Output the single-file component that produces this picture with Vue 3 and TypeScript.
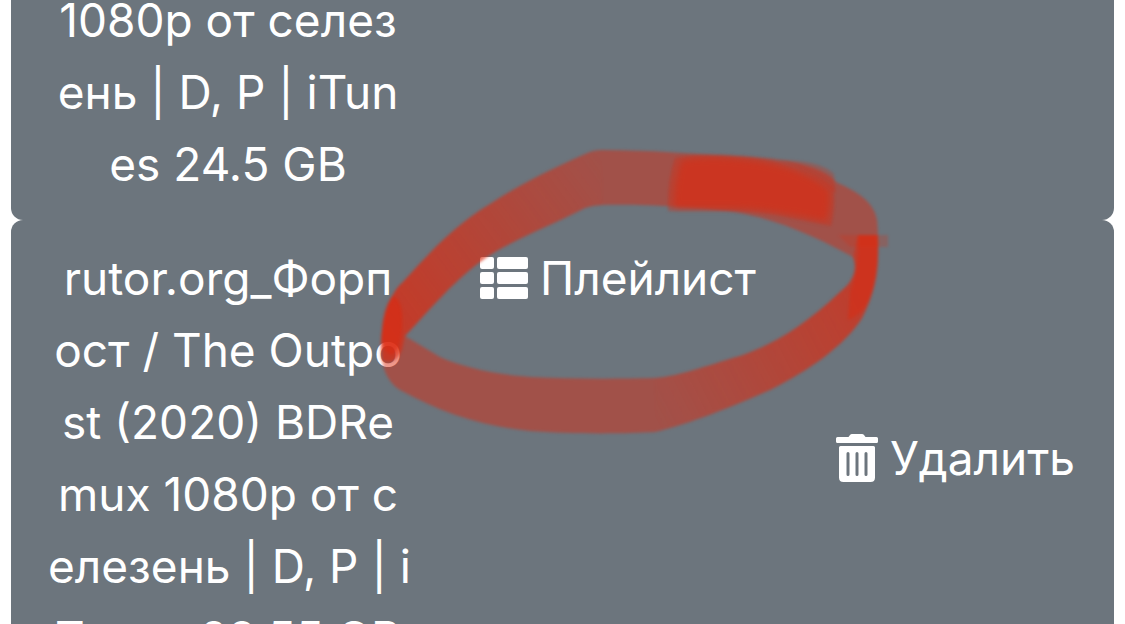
<script setup lang="ts">
interface Torrent {
  id: number
  lines: string[]
  actions: boolean
}

const torrents: Torrent[] = [
  { id: 1, lines: ['1080p от селез', 'ень | D, P | iTun', 'es 24.5 GB'], actions: false },
  {
    id: 2,
    lines: [
      'rutor.org_Форп',
      'ост / The Outpo',
      'st (2020) BDRe',
      'mux 1080p от с',
      'елезень | D, P | i',
      'Tunes 28.55 GB',
    ],
    actions: true,
  },
]
</script>

<template>
  <main class="page">
    <div class="list">
      <article v-for="t in torrents" :key="t.id" class="card">
        <p class="title">
          <span v-for="line in t.lines" :key="line" class="line">{{ line }}</span>
        </p>
        <template v-if="t.actions">
          <button type="button" class="action playlist">
            <svg class="icon" width="48" height="42" viewBox="0 0 48 42" aria-hidden="true">
              <g fill="currentColor">
                <rect x="0" y="0" width="14" height="12" rx="2" />
                <rect x="17" y="0" width="31" height="12" rx="2" />
                <rect x="0" y="15" width="14" height="12" rx="2" />
                <rect x="17" y="15" width="31" height="12" rx="2" />
                <rect x="0" y="30" width="14" height="12" rx="2" />
                <rect x="17" y="30" width="31" height="12" rx="2" />
              </g>
            </svg>
            <span>Плейлист</span>
          </button>
          <button type="button" class="action remove">
            <svg class="icon" width="42" height="48" viewBox="0 0 42 48" aria-hidden="true">
              <path
                fill="currentColor"
                fill-rule="evenodd"
                d="M1.500 3H12.500L14 1Q14.700 0 16 0H26Q27.300 0 28 1L29.500 3H40.500Q42 3 42 4.500V7.500Q42 9 40.500 9H1.500Q0 9 0 7.500V4.500Q0 3 1.500 3ZM4.500 12H37.500Q39 12 39 13.500V43.500Q39 48 34.500 48H7.500Q3 48 3 43.500V13.500Q3 12 4.500 12ZM12 18Q10.500 18 10.500 19.500V40.500Q10.500 42 12 42T13.500 40.500V19.500Q13.500 18 12 18ZM21 18Q19.500 18 19.500 19.500V40.500Q19.500 42 21 42T22.500 40.500V19.500Q22.500 18 21 18ZM30 18Q28.500 18 28.500 19.500V40.500Q28.500 42 30 42T31.500 40.500V19.500Q31.500 18 30 18Z"
              />
            </svg>
            <span>Удалить</span>
          </button>
        </template>
      </article>
    </div>

    <svg class="marker" width="520" height="300" viewBox="375 140 520 300" aria-hidden="true">
      <defs>
        <linearGradient id="leftInk" gradientUnits="userSpaceOnUse" x1="390" y1="330" x2="610" y2="170">
          <stop offset="0" stop-color="#dc2a10" stop-opacity="0.6" />
          <stop offset="1" stop-color="#dc2a10" stop-opacity="0" />
        </linearGradient>
        <linearGradient id="rightInk" gradientUnits="userSpaceOnUse" x1="865" y1="300" x2="650" y2="410">
          <stop offset="0" stop-color="#dc2a10" stop-opacity="0.5" />
          <stop offset="1" stop-color="#dc2a10" stop-opacity="0" />
        </linearGradient>
        <filter id="soft" x="-10%" y="-10%" width="120%" height="120%" color-interpolation-filters="sRGB">
          <feGaussianBlur stdDeviation="1.5" />
        </filter>
        <filter id="softer" x="-10%" y="-20%" width="120%" height="140%" color-interpolation-filters="sRGB">
          <feGaussianBlur stdDeviation="3" />
        </filter>
      </defs>
      <g filter="url(#soft)" fill="#dc2a10">
        <path
          fill-opacity="0.48"
          fill-rule="evenodd"
          d="M602 150C650 150 690 154 735 156C790 158 825 168 836 182C858 192 874 202 877 220C880 250 877 290 862 318C845 345 810 370 770 390C735 405 690 424 655 432C620 434 570 434 530 431C480 426 440 412 400 390C385 381 379 360 381 340C383 315 391 292 402 283C430 252 455 225 490 204C520 184 550 170 585 154Q593 150 602 150ZM602 205C640 204 700 207 735 212C785 221 825 242 853 257C858 270 853 282 840 292C805 325 775 344 740 356C705 366 680 376 655 378C615 379 570 379 530 377C490 374 460 366 440 357Q420 345 405 336C430 310 455 278 490 255C515 239 550 226 585 208Q593 205 602 205Z"
        />
        <path
          fill="url(#leftInk)"
          d="M602 150Q593 150 585 154C550 170 520 184 490 204C455 225 430 252 402 283C391 292 383 315 381 340L382 360Q395 366 402 350L405 336C430 310 455 278 490 255C515 239 550 226 585 208L602 205Z"
        />
        <path
          fill="url(#rightInk)"
          d="M877 235C880 265 877 290 862 318C845 345 810 370 770 390C735 405 690 424 655 432V378C680 376 705 366 740 356C775 344 805 325 840 292C853 282 858 270 853 257L858 235Z"
        />
        <path fill-opacity="0.35" d="M675 158Q700 153 735 156C790 160 820 176 833 188Q836 205 831 226C790 218 755 209 725 211H668Q667 180 675 158Z" />
        <path fill-opacity="0.3" d="M778 160Q820 160 834 174L836 194Q815 172 778 160Z" />
        <path fill-opacity="0.5" d="M858 235H878Q880 275 870 298Q862 315 848 320L850 292Q860 270 858 235Z" />
        <path fill-opacity="0.6" d="M392 296Q404 298 402 328Q400 350 392 355Q382 353 382 332Q382 310 392 296Z" />
        <path fill-opacity="0.25" d="M838 235H888V247H850Z" />
      </g>
      <path
        filter="url(#softer)"
        fill="#dc2a10"
        fill-opacity="0.55"
        d="M682 160Q710 156 735 159C785 163 812 176 829 190Q831 205 826 221C790 214 755 207 725 208H674Q674 180 682 160Z"
      />
    </svg>
  </main>
</template>

<style>
body {
  margin: 0;
  background: #fff;
}
</style>

<style scoped>
.page {
  position: relative;
  height: 100vh;
  overflow: hidden;
  background: #fff;
  font-family: Inter, "Liberation Sans", sans-serif;
  font-size: 46px;
  line-height: 72px;
  color: #fff;
}

.list {
  margin-top: -38px;
  padding: 0 11px;
}

.card {
  display: grid;
  grid-template-columns: 360px 1fr auto;
  column-gap: 72px;
  padding: 22px 39px 20px 37px;
  border-radius: 12px;
  background: #6c757d;
}

.title {
  margin: 0;
  text-align: center;
}

.line {
  display: block;
  white-space: nowrap;
}

.action {
  display: flex;
  align-items: center;
  gap: 12px;
  padding: 0;
  border: 0;
  background: none;
  color: inherit;
  font: inherit;
  white-space: nowrap;
  cursor: pointer;
}

.playlist {
  align-self: start;
  justify-self: start;
}

.remove {
  align-self: center;
}

.icon {
  flex: none;
}

.marker {
  position: absolute;
  left: 375px;
  top: 140px;
  pointer-events: none;
}
</style>
